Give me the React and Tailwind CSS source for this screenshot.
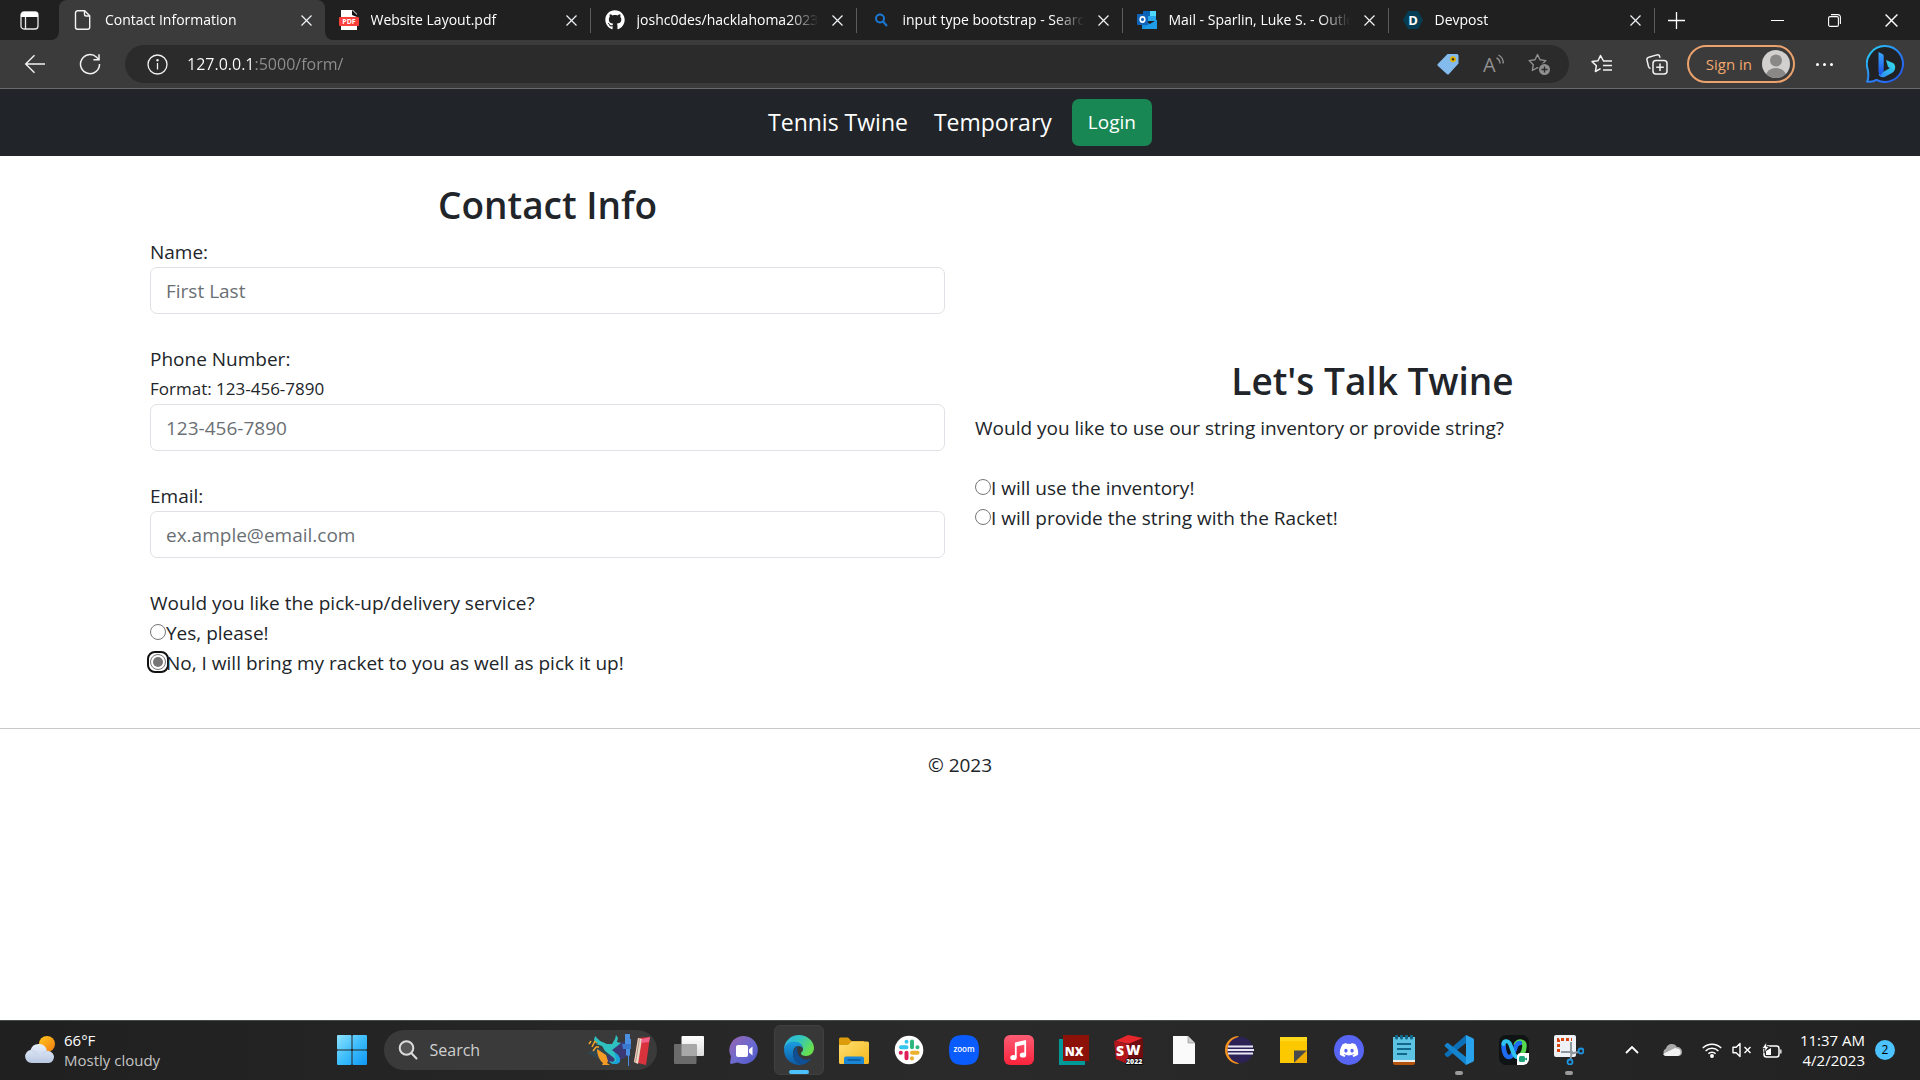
import { useState } from "react";
import { FaDiscord, FaGithub } from "react-icons/fa6";

const UI = "font-['Open_Sans','Noto_Sans',sans-serif]";

/* ---------- small line icons ---------- */

function Cross({ size = 11 }) {
  return (
    <svg width={size} height={size} viewBox="0 0 11 11" fill="none" stroke="currentColor" strokeWidth="1.2">
      <path d="M.5.5l10 10M10.5.5l-10 10" />
    </svg>
  );
}

function PageIcon() {
  return (
    <svg width="20" height="20" viewBox="0 0 20 20" fill="none" stroke="#f2f2f2" strokeWidth="1.4" strokeLinejoin="round">
      <path d="M4.5.8h7.2l5 5v11.4a2 2 0 0 1-2 2H4.5a2 2 0 0 1-2-2V2.800a2 2 0 0 1 2-2z" />
      <path d="M11.5.8v3.400a1.800 1.800 0 0 0 1.800 1.800h3.400" />
    </svg>
  );
}

function PdfIcon() {
  return (
    <svg width="20" height="20" viewBox="0 0 20 20">
      <path d="M2 0h12l4 4v16H2z" fill="#fff" />
      <path d="M13 0l5 5v2l-5-2z" fill="#111" />
      <rect x="0" y="7" width="20" height="9" rx="1" fill="#f9403d" />
      <text x="10" y="14" textAnchor="middle" fontSize="7" fontWeight="700" fill="#fff">PDF</text>
    </svg>
  );
}

function BlueSearchIcon() {
  return (
    <svg width="20" height="20" viewBox="0 0 20 20" fill="none" stroke="#1a78d6" strokeWidth="2">
      <circle cx="9" cy="8.5" r="4" />
      <path d="M12 11.5l4 4.5" />
    </svg>
  );
}

function OutlookIcon() {
  return (
    <svg width="20" height="20" viewBox="0 0 20 20">
      <path d="M6 1h13v10H6z" fill="#28a8ea" />
      <path d="M6 1h7v5H6z" fill="#0364b8" />
      <path d="M13 1h6v5h-6z" fill="#50d9ff" />
      <path d="M5 10l8 4 7-4v9H5z" fill="#1490df" />
      <path d="M5 19l15-9v8a1 1 0 0 1-1 1z" fill="#1f9ce5" />
      <rect x="0" y="4" width="11" height="11" rx="1" fill="#0f63b8" />
      <ellipse cx="5.5" cy="9.5" rx="2.3" ry="2.6" fill="none" stroke="#fff" strokeWidth="1.6" />
    </svg>
  );
}

function DevpostIcon() {
  return (
    <svg width="20" height="20" viewBox="0 0 20 20">
      <path d="M5 1h10l5 9-5 9H5l-5-9z" fill="#053e54" />
      <text x="10" y="15" textAnchor="middle" fontSize="13" fontWeight="700" fill="#fff">D</text>
    </svg>
  );
}

function TabActionsIcon() {
  return (
    <svg width="19" height="19" viewBox="0 0 19 19" fill="none">
      <rect x="1" y="1" width="17" height="17" rx="3" stroke="#e8e8e8" strokeWidth="1.3" />
      <path d="M1 6V4a3 3 0 0 1 3-3h11a3 3 0 0 1 3 3v2z" fill="#fff" />
      <path d="M5.5 6v12" stroke="#e8e8e8" strokeWidth="1.3" />
    </svg>
  );
}

/* ---------- toolbar icons ---------- */

function BackIcon() {
  return (
    <svg width="22" height="20" viewBox="0 0 22 20" fill="none" stroke="#f2f2f2" strokeWidth="1.4">
      <path d="M21 10H2M10.500 1.200L1.700 10l8.800 8.800" />
    </svg>
  );
}

function ReloadIcon() {
  return (
    <svg width="22" height="22" viewBox="0 0 22 22" fill="none" stroke="#f2f2f2" strokeWidth="1.5">
      <path d="M20.500 11A9.500 9.500 0 1 1 17.600 4.300L20 6.700" />
      <path d="M20 1.200v5.600h-5.600" />
    </svg>
  );
}

function InfoIcon() {
  return (
    <svg width="21" height="21" viewBox="0 0 21 21" fill="none" stroke="#f2f2f2" strokeWidth="1.3">
      <circle cx="10.5" cy="10.5" r="9.5" />
      <path d="M10.500 9v6.500" />
      <circle cx="10.5" cy="6.3" r=".6" fill="#f2f2f2" />
    </svg>
  );
}

function TagIcon() {
  return (
    <svg width="22" height="22" viewBox="0 0 22 22">
      <path d="M10.500 1H20a1.500 1.500 0 0 1 1.500 1.500v8L12 21a1.500 1.500 0 0 1-2.200 0L1 13a1.500 1.500 0 0 1 0-2.200z" fill="#83bbec" />
      <circle cx="16" cy="6.2" r="3" fill="#e0b400" />
      <circle cx="16" cy="6.2" r="1.2" fill="#3a3210" />
    </svg>
  );
}

function ReadAloudIcon() {
  return (
    <svg width="22" height="20" viewBox="0 0 22 20" fill="none" stroke="#8f8f8f" strokeWidth="1.4">
      <text x="0" y="18" fontSize="20" fill="#8f8f8f" stroke="none">A</text>
      <path d="M13.500 4a6 6 0 0 1 3.500 5.500M15.500 1a9 9 0 0 1 4.700 8.500" />
    </svg>
  );
}

const STAR = "M9.500 1.500l2.500 5.300 5.800.8-4.200 4.100 1 5.800-5.100-2.800-5.200 2.800 1-5.800L1.100 7.600l5.900-.8z";

function AddFavoriteIcon() {
  return (
    <svg width="23" height="23" viewBox="0 0 23 23" fill="none">
      <path d={STAR} stroke="#8f8f8f" strokeWidth="1.4" strokeLinejoin="round" />
      <circle cx="16.5" cy="16.5" r="6.5" fill="#2b2b2b" />
      <circle cx="16.5" cy="16.5" r="5.5" fill="#8f8f8f" />
      <path d="M16.500 13.500v6M13.500 16.500h6" stroke="#2b2b2b" strokeWidth="1.3" />
    </svg>
  );
}

function FavoritesIcon() {
  return (
    <svg width="22" height="20" viewBox="0 0 22 20" fill="none" stroke="#f2f2f2" strokeWidth="1.5" strokeLinejoin="round">
      <path d="M12.500 7L9.500 1.500 7 6.800l-5.900.8 4.300 4.100-1 5.800 5.200-2.800" />
      <path d="M12 7h9M12 11.500h9M12 16h9" />
    </svg>
  );
}

function CollectionsIcon() {
  return (
    <svg width="22" height="22" viewBox="0 0 22 22" fill="none" stroke="#f2f2f2" strokeWidth="1.5">
      <path d="M4.500 15.500a3 3 0 0 1-2-2L1 7.200a2.500 2.500 0 0 1 1.800-3l8-2.300a2.500 2.500 0 0 1 3 1.800l.3 1" />
      <rect x="7" y="7.5" width="14" height="13.5" rx="3" />
      <path d="M14 10.500v7.500M10.200 14.200h7.600" />
    </svg>
  );
}

function AvatarIcon() {
  return (
    <svg width="28" height="28" viewBox="0 0 28 28">
      <defs>
        <clipPath id="avatar-clip"><circle cx="14" cy="14" r="14" /></clipPath>
      </defs>
      <circle cx="14" cy="14" r="14" fill="#d2d0ce" />
      <g clipPath="url(#avatar-clip)" fill="#8a8886">
        <circle cx="14" cy="10.5" r="6" />
        <ellipse cx="14" cy="26" rx="10" ry="8" />
      </g>
    </svg>
  );
}

function BingIcon() {
  return (
    <svg width="38" height="38" viewBox="0 0 38 38">
      <defs>
        <linearGradient id="bing-ring" x1="0" y1="0" x2="1" y2="1">
          <stop offset="0" stopColor="#27d3f5" />
          <stop offset=".55" stopColor="#2a7ff5" />
          <stop offset="1" stopColor="#2150e8" />
        </linearGradient>
        <linearGradient id="bing-stem" x1="0" y1="0" x2="0" y2="1">
          <stop offset="0" stopColor="#37a8ff" />
          <stop offset="1" stopColor="#1c4fe6" />
        </linearGradient>
        <linearGradient id="bing-bowl" x1="0" y1="1" x2="1" y2="0">
          <stop offset="0" stopColor="#2a86f7" />
          <stop offset="1" stopColor="#37e3e8" />
        </linearGradient>
      </defs>
      <path
        d="M19 1a18 18 0 1 1-8.500 33.900C8 36.500 4.500 37.200 1.200 36.500 2.600 34 2.600 28 1.700 24.500A18 18 0 0 1 19 1z"
        fill="#202124" stroke="url(#bing-ring)" strokeWidth="2"
      />
      <path d="M20 15l7.500 3.200c3 2.800 1.600 8-1.200 9.600L18.500 32c-3 1-5-.5-6-2.500l11.500-6.500-2-1z" fill="url(#bing-bowl)" />
      <path d="M12.500 7l4 2a2 2 0 0 1 1.200 1.800V26l-3.200 4.500a5 5 0 0 1-2-3.700z" fill="url(#bing-stem)" />
    </svg>
  );
}

/* ---------- taskbar icons ---------- */

function WeatherIcon() {
  return (
    <svg width="32" height="32" viewBox="0 0 32 32">
      <defs>
        <linearGradient id="sun" x1="0" y1="0" x2="1" y2="1">
          <stop offset="0" stopColor="#ffc81e" />
          <stop offset="1" stopColor="#f37b12" />
        </linearGradient>
        <linearGradient id="cloud" x1="0" y1="0" x2="0" y2="1">
          <stop offset="0" stopColor="#e8f0fc" />
          <stop offset="1" stopColor="#b9c8e2" />
        </linearGradient>
      </defs>
      <circle cx="23" cy="10" r="8" fill="url(#sun)" />
      <path d="M7.500 29a6.500 6.500 0 0 1-1-12.900 8.500 8.500 0 0 1 16.500 1 6 6 0 0 1 2 11.900z" fill="url(#cloud)" />
      <path d="M7.500 16.500a7 7 0 0 1 6 4.500M23 17.500a7 7 0 0 0-5 2.500" stroke="#c3d0e8" fill="none" />
    </svg>
  );
}

function StartIcon() {
  return (
    <svg width="30" height="30" viewBox="0 0 30 30">
      <defs>
        <linearGradient id="win" gradientUnits="userSpaceOnUse" x1="0" y1="0" x2="30" y2="30">
          <stop offset="0" stopColor="#8fe2ff" />
          <stop offset=".5" stopColor="#3dbdfb" />
          <stop offset="1" stopColor="#0f96f4" />
        </linearGradient>
      </defs>
      <g fill="url(#win)">
        <rect x="0" y="0" width="14.5" height="14.5" rx="1" />
        <rect x="15.5" y="0" width="14.5" height="14.5" rx="1" />
        <rect x="0" y="15.5" width="14.5" height="14.5" rx="1" />
        <rect x="15.5" y="15.5" width="14.5" height="14.5" rx="1" />
      </g>
    </svg>
  );
}

function MagnifierIcon() {
  return (
    <svg width="20" height="20" viewBox="0 0 20 20" fill="none" stroke="#dcdcdc" strokeWidth="2" strokeLinecap="round">
      <circle cx="8.5" cy="8" r="6.8" fill="#555" />
      <path d="M13.500 13.200l5 5.300" />
    </svg>
  );
}

function SearchArt() {
  return (
    <svg width="64" height="34" viewBox="0 0 64 34">
      <path d="M22 14l12-5 7 0v14l-10 5-14 2z" fill="#3b3a86" opacity=".8" />
      <path d="M0 20l12-6 10 8-6 6z" fill="#2f4650" />
      <path d="M2 11l2-3M5 14l3-6 2 2M6 18l3-4 3 0" stroke="#f0a52c" strokeWidth="1.5" fill="none" />
      <path d="M10 16l3 2 6 4 2 6-1 2 3 2h-8l1-2c-4-3-6-9-6-14z" fill="#f49b26" />
      <path d="M8 3l5 5 7 3 5 0 3-5 1-4 2 3-1 4 4 1-5 4-4 3 6 5c3 4 2 9-4 9-2 0-4-1-5-3 4 2 7 0 5-3l-9-7-3-5-6-2 2-1-4-3z" fill="#2fc1c0" />
      <path d="M27 19c5 3 8 8 5 11-3 2-6 1-8-1 4 1 6-1 5-4z" fill="#1aa2dc" />
      <path d="M38 1h5v5h1v7h-1v9l-1 1v10h-1V23l-2-1v-9h-1z" fill="#4a8fe0" />
      <path d="M35 11h9v5h-8z" fill="#3978cf" />
      <path d="M51 5l12-1-4 28-12-3z" fill="#d8333c" />
      <path d="M51 5l4 1-4 25-4-2z" fill="#e9d9c4" />
      <path d="M52.500 6l-4 23" stroke="#a08a78" strokeWidth=".8" />
      <path d="M55 6l8-2-1 5-8 1z" fill="#f2618a" />
    </svg>
  );
}

function TaskViewIcon() {
  return (
    <svg width="30" height="30" viewBox="0 0 30 30">
      <defs>
        <linearGradient id="tv" x1="0" y1="0" x2="0" y2="1">
          <stop offset="0" stopColor="#fff" />
          <stop offset="1" stopColor="#dcdcdc" />
        </linearGradient>
      </defs>
      <rect x="7.5" y="1" width="22.5" height="20" rx="1" fill="url(#tv)" />
      <rect x="0" y="9" width="22.5" height="20" rx="1" fill="#6b6b6b" />
      <path d="M7.500 9h14a1 1 0 0 1 1 1v11h-15z" fill="#a8a8a8" />
    </svg>
  );
}

function ChatIcon() {
  return (
    <svg width="30" height="30" viewBox="0 0 30 30">
      <defs>
        <linearGradient id="chat" x1="0" y1="0" x2="1" y2="1">
          <stop offset="0" stopColor="#9a63ae" />
          <stop offset=".55" stopColor="#6a6bd0" />
          <stop offset="1" stopColor="#4f52c4" />
        </linearGradient>
      </defs>
      <path d="M15 1a14 14 0 1 1-6.500 26.500L2 29l-1-1 1-6.500A14 14 0 0 1 15 1z" fill="url(#chat)" />
      <rect x="7" y="10" width="12" height="12" rx="2" fill="#fff" />
      <path d="M20 14.500l3.500-3v9l-3.500-3z" fill="#fff" />
    </svg>
  );
}

function EdgeIcon() {
  return (
    <svg width="30" height="30" viewBox="0 0 30 30">
      <defs>
        <linearGradient id="edge-top" x1="0" y1="0" x2="1" y2=".5">
          <stop offset="0" stopColor="#2fb2e8" />
          <stop offset=".5" stopColor="#30c5c0" />
          <stop offset="1" stopColor="#68e04e" />
        </linearGradient>
        <linearGradient id="edge-low" x1="0" y1="0" x2="0" y2="1">
          <stop offset="0" stopColor="#1b9de2" />
          <stop offset="1" stopColor="#0c59a4" />
        </linearGradient>
      </defs>
      <path d="M0 15C0 6 7 0 15 0s15 6 15 13c0 5-4 8-8 8-3 0-5-1-5-2.500S19 17 19 14c0-4-4-7-8.500-7C5 7 1 11 0 15z" fill="url(#edge-top)" />
      <path d="M0 15c.5-5 4.500-8.500 10-8.500 5 0 9 3.500 9 7.500 0 0-1-3-4.500-3S9 14 9 19c0 6 4.500 10 9 10.700A15 15 0 0 1 0 15z" fill="url(#edge-low)" />
      <path d="M14 11.500C11 13 9 16 9 19c0 6 4.500 10 9 10.700 4-.7 7.500-3 9.500-6.200-3 1.500-6 1.500-8.500.5-5-2-7-8-5-12.500z" fill="#104f93" />
    </svg>
  );
}

function FolderIcon() {
  return (
    <svg width="30" height="30" viewBox="0 0 30 30">
      <defs>
        <linearGradient id="folder" x1="0" y1="0" x2="1" y2="1">
          <stop offset="0" stopColor="#ffdf73" />
          <stop offset="1" stopColor="#f5b81c" />
        </linearGradient>
      </defs>
      <path d="M0 4a1.500 1.500 0 0 1 1.500-1.500H9l3.500 3.500H25v6H0z" fill="#dc9c0c" />
      <path d="M0 10h9l3.500-3.500h16A1.500 1.500 0 0 1 30 8v19.500a1.500 1.500 0 0 1-1.500 1.500h-27A1.500 1.500 0 0 1 0 27.500z" fill="url(#folder)" />
      <path d="M5 29v-5.500a2 2 0 0 1 2-2h16a2 2 0 0 1 2 2V29z" fill="#1a86d6" />
      <path d="M9 25h12" stroke="#0c5797" strokeWidth="1.5" strokeLinecap="round" />
    </svg>
  );
}

function SlackIcon() {
  return (
    <svg width="30" height="30" viewBox="0 0 30 30" strokeWidth="4" strokeLinecap="round">
      <circle cx="15" cy="15" r="14.3" fill="#fff" />
      <path d="M12.500 6.700v.1M7 12.200h5.500" stroke="#36c5f0" />
      <path d="M18 6.500v5.800M23.500 12.200h-.1" stroke="#2eb67d" />
      <path d="M18 17.800h5.500M18 23.300v.1" stroke="#ecb22e" />
      <path d="M12.500 17.800v5.500M6.700 17.800h.1" stroke="#e01e5a" />
    </svg>
  );
}

function ZoomIcon() {
  return (
    <svg width="30" height="30" viewBox="0 0 30 30">
      <path d="M15 0c11 0 15 4 15 15s-4 15-15 15S0 26 0 15 4 0 15 0z" fill="#0b5cff" />
      <text x="15" y="17" textAnchor="middle" fontSize="8" fontWeight="600" fill="#fff">zoom</text>
    </svg>
  );
}

function MusicIcon() {
  return (
    <svg width="30" height="30" viewBox="0 0 30 30">
      <defs>
        <linearGradient id="music" x1="0" y1="0" x2="0" y2="1">
          <stop offset="0" stopColor="#fb5c74" />
          <stop offset="1" stopColor="#fa233b" />
        </linearGradient>
      </defs>
      <rect width="30" height="30" rx="6" fill="url(#music)" />
      <path d="M11.800 8v14M21.200 6v13.500" stroke="#fff" strokeWidth="1.8" />
      <path d="M11 7.500L22 5v4.200L11 11.700z" fill="#fff" />
      <ellipse cx="9.5" cy="22.500" rx="3.2" ry="2.600" fill="#fff" />
      <ellipse cx="19" cy="20" rx="3.2" ry="2.600" fill="#fff" />
    </svg>
  );
}

function NxIcon() {
  return (
    <svg width="30" height="30" viewBox="0 0 30 30">
      <path d="M0 4h26v26H0z" fill="#009999" />
      <path d="M4 0h26v26H4z" fill="#8c1209" />
      <text x="15" y="21" textAnchor="middle" fontSize="12" fontWeight="800" fill="#fff">NX</text>
    </svg>
  );
}

function SolidWorksIcon() {
  return (
    <svg width="30" height="30" viewBox="0 0 30 30">
      <path d="M1 6L14 0l15 3-13 6z" fill="#e6262b" />
      <path d="M0 6l14 3v20L2 24z" fill="#b3161a" />
      <path d="M14 9l15-6v20l-15 6z" fill="#6e0c10" />
      <text x="2" y="21" fontSize="14" fontWeight="800" fill="#fff">S</text>
      <text x="12" y="20" fontSize="14" fontWeight="800" fill="#fff">W</text>
      <text x="12" y="29" fontSize="7" fontWeight="800" fill="#fff" stroke="#000" strokeWidth="1.5" paintOrder="stroke">2022</text>
    </svg>
  );
}

function BlankFileIcon() {
  return (
    <svg width="22" height="28" viewBox="0 0 22 28">
      <path d="M0 0h15l7 7v21H0z" fill="#fafafa" />
      <path d="M15 0l7 7h-7z" fill="#cfcfcf" stroke="#888" strokeWidth=".6" />
    </svg>
  );
}

function EclipseIcon() {
  return (
    <svg width="30" height="30" viewBox="0 0 30 30">
      <path d="M15 1a14 14 0 0 0 0 28A18 18 0 0 1 15 1z" fill="#f7941e" />
      <circle cx="16.5" cy="15" r="13" fill="#2c2255" />
      <path d="M4 11.500h25M3.500 15h26.500M4 18.500h25" stroke="#e9e7f3" strokeWidth="2" />
    </svg>
  );
}

function StickyIcon() {
  return (
    <svg width="27" height="27" viewBox="0 0 27 27">
      <path d="M0 1h27v26H0z" fill="#fcc800" />
      <path d="M0 1h27v4H0z" fill="#ffd91a" />
      <path d="M14 14.500h13L14 27z" fill="#4a4a4a" />
      <path d="M27 14.500V27H14z" fill="#f0ae00" />
    </svg>
  );
}

function DiscordIcon() {
  return (
    <span className="grid size-[30px] place-items-center rounded-full bg-[#5865f2]">
      <FaDiscord className="text-white" size={20} />
    </span>
  );
}

function NotepadIcon() {
  return (
    <svg width="22" height="30" viewBox="0 0 22 30">
      <path d="M0 26h22v2a2 2 0 0 1-2 2H2a2 2 0 0 1-2-2z" fill="#b4530c" />
      <path d="M0 25h22v2H0z" fill="#eee" />
      <path d="M0 2h22v23H0z" fill="#5cc4e2" />
      <path d="M4 9h14M4 14h14M4 19h10" stroke="#12688a" strokeWidth="2" />
      <path d="M3.500 1v2M8.500 1v2M13.500 1v2M18.500 1v2" stroke="#12688a" strokeWidth="3" strokeLinecap="round" />
    </svg>
  );
}

function VsCodeIcon() {
  return (
    <svg width="30" height="30" viewBox="0 0 30 30">
      <path d="M22 0L1 18.500a1.200 1.200 0 0 0 0 1.700l1.700 1.600c.5.400 1.200.4 1.700 0L22 8z" fill="#0b70b8" />
      <path d="M22 30L1 11.500a1.200 1.200 0 0 1 0-1.700l1.700-1.600c.5-.4 1.200-.4 1.700 0L22 22z" fill="#1484cf" />
      <path d="M22 0l7 3.300c.6.300 1 .9 1 1.600v20.200c0 .7-.4 1.300-1 1.600L22 30z" fill="#2aa3ee" />
    </svg>
  );
}

function WebexIcon() {
  return (
    <svg width="30" height="30" viewBox="0 0 30 30" fill="none">
      <rect width="30" height="30" rx="7" fill="#101314" />
      <path d="M17 9c3-4 8.500-3 8.500 2 0 3-1 6-3 9" stroke="#56d94e" strokeWidth="4.5" strokeLinecap="round" />
      <path d="M4.500 9c0 8 2 13 5.500 13 4 0 5-6 7-11 1-2 2-3 4-3" stroke="#1e6cf2" strokeWidth="4.5" strokeLinecap="round" />
      <path d="M4.500 9c0-3 4-4 6-1 3 5 3 12 7 14" stroke="#2fc4ee" strokeWidth="4" strokeLinecap="round" />
      <path d="M18 22a4 4 0 0 1 4-4h8v6a6 6 0 0 1-6 6h-6z" fill="#fff" />
      <rect x="20" y="21" width="6" height="6" rx="1.5" fill="#1da37a" />
      <path d="M26 23.500l2-1v3l-2-1z" fill="#1da37a" />
    </svg>
  );
}

function SnipIcon() {
  return (
    <svg width="30" height="30" viewBox="0 0 30 30" fill="none">
      <rect x="0" y="0" width="22" height="22" rx="2" fill="#eef1f5" />
      <path d="M4.500 17V4.500H18" stroke="#d8420e" strokeWidth="3" strokeDasharray="3 2" />
      <path d="M17 7v12M7 17h12" stroke="#8f979f" strokeWidth="2" />
      <path d="M17.500 18.500L24.500 17M17.500 18.500l-1 6" stroke="#8f979f" strokeWidth="1.8" />
      <circle cx="27" cy="16" r="2.500" stroke="#1f93e0" strokeWidth="1.8" />
      <circle cx="16" cy="27" r="2.500" stroke="#1f93e0" strokeWidth="1.8" />
    </svg>
  );
}

/* ---------- tray icons ---------- */

function ChevronUpIcon() {
  return (
    <svg width="14" height="8" viewBox="0 0 14 8" fill="none" stroke="#fff" strokeWidth="1.8">
      <path d="M1 7l6-6 6 6" />
    </svg>
  );
}

function OneDriveIcon() {
  return (
    <svg width="20" height="14" viewBox="0 0 20 14">
      <path d="M4 13a4 4 0 0 1 0-7.500A6 6 0 0 1 15 4c3 0 5 2 5 5a4 4 0 0 1-4 4z" fill="#a9a9a9" />
      <path d="M1 11l7-3.500 5-2.500 4 1a4 4 0 0 1-1 7H4a4 4 0 0 1-3-2z" fill="#f2f2f2" />
    </svg>
  );
}

function WifiIcon() {
  return (
    <svg width="20" height="16" viewBox="0 0 20 16" fill="none" stroke="#fff" strokeWidth="1.5">
      <path d="M.8 6A13 13 0 0 1 19.200 6M3.600 9a9 9 0 0 1 12.800 0M6.400 11.800a5 5 0 0 1 7.200 0" />
      <circle cx="10" cy="14" r="1.2" fill="#fff" />
    </svg>
  );
}

function MutedIcon() {
  return (
    <svg width="20" height="16" viewBox="0 0 20 16" fill="none" stroke="#fff" strokeWidth="1.4" strokeLinejoin="round">
      <path d="M1 5.200h3.200L8 1.500v13l-3.800-3.700H1z" />
      <path d="M12.500 5l6 6M18.500 5l-6 6" />
    </svg>
  );
}

function BatteryIcon() {
  return (
    <svg width="20" height="16" viewBox="0 0 20 16" fill="none">
      <rect x="2" y="4" width="15" height="11" rx="2.500" stroke="#fff" strokeWidth="1.5" />
      <path d="M18.200 7.500h1.300v4h-1.300z" fill="#fff" />
      <path d="M4 13V9l5-3v7z" fill="#fff" />
      <path d="M4.500 0L0 6.500h3L2 11l5-6.500H4.500z" fill="#fff" stroke="#292929" strokeWidth=".8" />
    </svg>
  );
}

/* ---------- browser ---------- */

const TABS = [
  { title: "Contact Information", icon: <PageIcon /> },
  { title: "Website Layout.pdf", icon: <PdfIcon /> },
  { title: "joshc0des/hacklahoma2023:", icon: <FaGithub size={20} className="text-white" /> },
  { title: "input type bootstrap - Search", icon: <BlueSearchIcon /> },
  { title: "Mail - Sparlin, Luke S. - Outlook", icon: <OutlookIcon /> },
  { title: "Devpost", icon: <DevpostIcon /> },
];

function BrowserTab({ tab, active, next }) {
  const inner = (
    <>
      <button className="flex h-full min-w-0 flex-1 items-center gap-3 text-left">
        <span className="shrink-0">{tab.icon}</span>
        <span className="flex-1 overflow-hidden whitespace-nowrap [mask-image:linear-gradient(to_right,#000_82%,transparent_98%)]">
          {tab.title}
        </span>
      </button>
      <button aria-label={`Close ${tab.title}`} className="mr-0.5 grid size-8 shrink-0 place-items-center text-gray-100">
        <Cross />
      </button>
    </>
  );
  if (active) {
    return (
      <div className="h-full max-w-[267px] flex-1 bg-linear-to-b from-[#202020] from-50% to-[#3b3b3b] to-50%">
        <div className="flex h-full items-center rounded-t-lg bg-[#3b3b3b] pl-3.5">{inner}</div>
      </div>
    );
  }
  return (
    <div className={`flex h-full max-w-[266px] flex-1 items-center bg-[#202020] pl-3.5 ${next ? "rounded-bl-lg" : ""}`}>
      {inner}
      <span className="h-[25px] w-px bg-[#5c5c5c]" />
    </div>
  );
}

function TabStrip() {
  return (
    <div className="flex h-10 items-center bg-[#3b3b3b] text-sm text-white">
      <button aria-label="Tab actions menu" className="grid h-full w-[59px] place-items-center rounded-br-lg bg-[#202020]">
        <TabActionsIcon />
      </button>
      {TABS.map((tab, i) => (
        <BrowserTab key={tab.title} tab={tab} active={i === 0} next={i === 1} />
      ))}
      <div className="flex h-full flex-1 items-center bg-[#202020]">
        <button aria-label="New tab" className="grid h-full w-11 place-items-center">
          <svg width="17" height="17" viewBox="0 0 17 17" stroke="#fff" strokeWidth="1.3">
            <path d="M8.500 0v17M0 8.500h17" />
          </svg>
        </button>
        <div className="ml-auto flex h-full">
          <button aria-label="Minimize" className="grid w-[57px] place-items-center">
            <span className="h-px w-[13px] bg-white" />
          </button>
          <button aria-label="Restore" className="grid w-[57px] place-items-center">
            <svg width="13" height="13" viewBox="0 0 13 13" fill="none" stroke="#fff" strokeWidth="1.1">
              <rect x=".6" y="2.6" width="9.8" height="9.8" rx="1.5" />
              <path d="M3 .6h7a2.400 2.400 0 0 1 2.400 2.400v7" />
            </svg>
          </button>
          <button aria-label="Close window" className="grid w-[57px] place-items-center text-white">
            <Cross size={13} />
          </button>
        </div>
      </div>
    </div>
  );
}

function Toolbar() {
  return (
    <div className="flex h-[49px] items-center border-b border-[#6a6a6a] bg-[#3b3b3b] pr-4 pl-[7px]">
      <button aria-label="Back" className="grid w-[55px] place-items-center"><BackIcon /></button>
      <button aria-label="Refresh" className="grid w-[55px] place-items-center"><ReloadIcon /></button>
      <div className="mr-1.5 ml-2 flex h-[38px] flex-1 items-center rounded-full bg-[#2b2b2b] pr-1.5 pl-[22px]">
        <button aria-label="View site information" className="mr-[19px]"><InfoIcon /></button>
        <input
          aria-label="Address bar"
          defaultValue="127.0.0.1:5000/form/"
          className="min-w-0 flex-1 bg-linear-to-r from-white from-[68px] to-[#8f8f8f] to-[68px] bg-clip-text text-base text-transparent caret-white outline-none"
        />
        <button aria-label="Shopping" className="grid w-[46px] place-items-center"><TagIcon /></button>
        <button aria-label="Read aloud" className="grid w-[46px] place-items-center"><ReadAloudIcon /></button>
        <button aria-label="Add to favorites" className="grid w-[46px] place-items-center"><AddFavoriteIcon /></button>
      </div>
      <button aria-label="Favorites" className="grid w-[55px] place-items-center"><FavoritesIcon /></button>
      <button aria-label="Collections" className="grid w-[55px] place-items-center"><CollectionsIcon /></button>
      <button className="mx-0.5 flex h-[38px] items-center gap-2.5 rounded-full border-2 border-[#eca26c] pr-[3px] pl-[17px] text-[15px] text-[#f4a76f]">
        Sign in
        <AvatarIcon />
      </button>
      <button aria-label="Settings and more" className="flex w-[55px] justify-center gap-1">
        <span className="size-[3px] rounded-full bg-white" />
        <span className="size-[3px] rounded-full bg-white" />
        <span className="size-[3px] rounded-full bg-white" />
      </button>
      <button aria-label="Bing chat" className="ml-3.5"><BingIcon /></button>
    </div>
  );
}

/* ---------- page ---------- */

function SiteNav() {
  return (
    <nav className="flex h-[67px] items-center justify-center bg-[#212529] text-white">
      <a href="#home" className="mr-[26px] text-[23px]">Tennis Twine</a>
      <a href="#temporary" className="mr-5 text-[23px]">Temporary</a>
      <button className="h-[47px] rounded-[7px] bg-[#198754] px-4 text-[19px]">Login</button>
    </nav>
  );
}

function TextField({ id, label, hint, type = "text", placeholder }) {
  return (
    <div className="mb-[30px]">
      <label htmlFor={id} className="block">{label}</label>
      {hint && <small id={`${id}-hint`} className="block text-[17px] leading-[30px]">{hint}</small>}
      <input
        id={id}
        type={type}
        placeholder={placeholder}
        aria-describedby={hint ? `${id}-hint` : undefined}
        className="block h-[47px] w-full rounded-[7px] border border-[#dee2e6] bg-white px-[15px] text-[19px] placeholder:text-[#6a6f74]"
      />
    </div>
  );
}

function Choice({ name, value, selected, onSelect, children }) {
  const on = selected === value;
  return (
    <label className="flex h-[30px] items-center">
      <span className={`mb-0.5 flex rounded-[5px] ${on ? "outline-2 outline-offset-1 outline-[#101010]" : ""}`}>
        <input
          type="radio"
          name={name}
          value={value}
          checked={on}
          onChange={() => onSelect(value)}
          className="size-4 appearance-none rounded-full border border-[#767676] bg-white bg-clip-content p-0.5 outline-none checked:bg-[#767676]"
        />
      </span>
      {children}
    </label>
  );
}

function ContactForm() {
  const [delivery, setDelivery] = useState("no");
  const [strings, setStrings] = useState("");

  return (
    <form className="mx-auto flex max-w-[1650px] items-center text-[19px] leading-[30px]">
      <section className="flex-1 px-[15px] pt-6 pb-[30px]">
        <h1 className="mb-2 text-center text-[37px] leading-[49px] font-semibold">Contact Info</h1>
        <TextField id="name" label="Name:" placeholder="First Last" />
        <TextField id="phone" type="tel" label="Phone Number:" hint="Format: 123-456-7890" placeholder="123-456-7890" />
        <TextField id="email" type="email" label="Email:" placeholder="ex.ample@email.com" />
        <fieldset>
          <legend>Would you like the pick-up/delivery service?</legend>
          <Choice name="delivery" value="yes" selected={delivery} onSelect={setDelivery}>Yes, please!</Choice>
          <Choice name="delivery" value="no" selected={delivery} onSelect={setDelivery}>
            No, I will bring my racket to you as well as pick it up!
          </Choice>
        </fieldset>
      </section>
      <section className="flex-1 px-[15px] pt-6 pb-[30px]">
        <h1 className="mt-[30px] mb-2 text-center text-[37px] leading-[49px] font-semibold">Let&apos;s Talk Twine</h1>
        <fieldset>
          <legend className="mb-[30px]">Would you like to use our string inventory or provide string?</legend>
          <Choice name="strings" value="inventory" selected={strings} onSelect={setStrings}>I will use the inventory!</Choice>
          <Choice name="strings" value="own" selected={strings} onSelect={setStrings}>
            I will provide the string with the Racket!
          </Choice>
        </fieldset>
      </section>
    </form>
  );
}

/* ---------- taskbar ---------- */

const APPS = [
  { name: "Task View", icon: <TaskViewIcon /> },
  { name: "Chat", icon: <ChatIcon /> },
  { name: "Microsoft Edge", icon: <EdgeIcon />, active: true },
  { name: "File Explorer", icon: <FolderIcon /> },
  { name: "Slack", icon: <SlackIcon /> },
  { name: "Zoom", icon: <ZoomIcon /> },
  { name: "Apple Music", icon: <MusicIcon /> },
  { name: "NX", icon: <NxIcon /> },
  { name: "SolidWorks", icon: <SolidWorksIcon /> },
  { name: "Document", icon: <BlankFileIcon /> },
  { name: "Eclipse", icon: <EclipseIcon /> },
  { name: "Sticky Notes", icon: <StickyIcon /> },
  { name: "Discord", icon: <DiscordIcon /> },
  { name: "Notepad", icon: <NotepadIcon /> },
  { name: "Visual Studio Code", icon: <VsCodeIcon />, running: true },
  { name: "Webex", icon: <WebexIcon /> },
  { name: "Snipping Tool", icon: <SnipIcon />, running: true },
];

function Taskbar() {
  return (
    <footer className="grid h-[60px] grid-cols-[1fr_auto_1fr] items-center border-t border-[#454b48] bg-linear-to-r from-[#202020] via-[#2a2a2a] to-[#222222] pb-0.5 text-[15px] text-white">
      <button className="flex items-center gap-2 pl-6 text-left leading-5">
        <WeatherIcon />
        <span>
          <span className="block">66°F</span>
          <span className="block text-[#c4c4c4]">Mostly cloudy</span>
        </span>
      </button>

      <div className="flex items-center gap-[5px]">
        <button aria-label="Start" className="grid size-[50px] place-items-center"><StartIcon /></button>
        <label className="mx-0.5 flex h-10 w-[273px] items-center rounded-full bg-[#3a3a3a] pr-1.5 pl-3.5">
          <MagnifierIcon />
          <input
            type="search"
            aria-label="Search"
            placeholder="Search"
            className="ml-3 min-w-0 flex-1 bg-transparent text-base outline-none placeholder:text-[#cfcfcf]"
          />
          <SearchArt />
        </label>
        {APPS.map((app) => (
          <button
            key={app.name}
            aria-label={app.name}
            className={`relative grid size-[50px] place-items-center rounded-md ${app.active ? "border border-[#404040] bg-[#383838]" : ""}`}
          >
            {app.icon}
            {app.active && <span className="absolute bottom-0 h-1 w-5 rounded-full bg-[#4cc2ff]" />}
            {app.running && <span className="absolute bottom-0 h-1 w-2 rounded-full bg-[#9a9a9a]" />}
          </button>
        ))}
      </div>

      <div className="flex items-center justify-end pr-[25px]">
        <button aria-label="Show hidden icons" className="grid w-10 place-items-center"><ChevronUpIcon /></button>
        <button aria-label="OneDrive" className="grid w-10 place-items-center"><OneDriveIcon /></button>
        <button aria-label="Network, volume and battery" className="mx-2.5 flex gap-2.5">
          <WifiIcon />
          <MutedIcon />
          <BatteryIcon />
        </button>
        <button className="ml-2 text-right leading-5">
          <span className="block">11:37 AM</span>
          <span className="block">4/2/2023</span>
        </button>
        <button aria-label="2 notifications" className="ml-2.5 grid size-5 place-items-center rounded-full bg-[#4cc2ff] text-xs text-black">
          2
        </button>
      </div>
    </footer>
  );
}

export default function App() {
  return (
    <div className={`flex min-h-screen flex-col bg-white text-[#212529] ${UI}`}>
      <header>
        <TabStrip />
        <Toolbar />
      </header>
      <SiteNav />
      <main className="flex-1">
        <ContactForm />
        <hr className="mt-5 border-[#c7c8c9]" />
        <p className="mt-[21px] text-center text-[19px] leading-[30px]">© 2023</p>
      </main>
      <Taskbar />
    </div>
  );
}
